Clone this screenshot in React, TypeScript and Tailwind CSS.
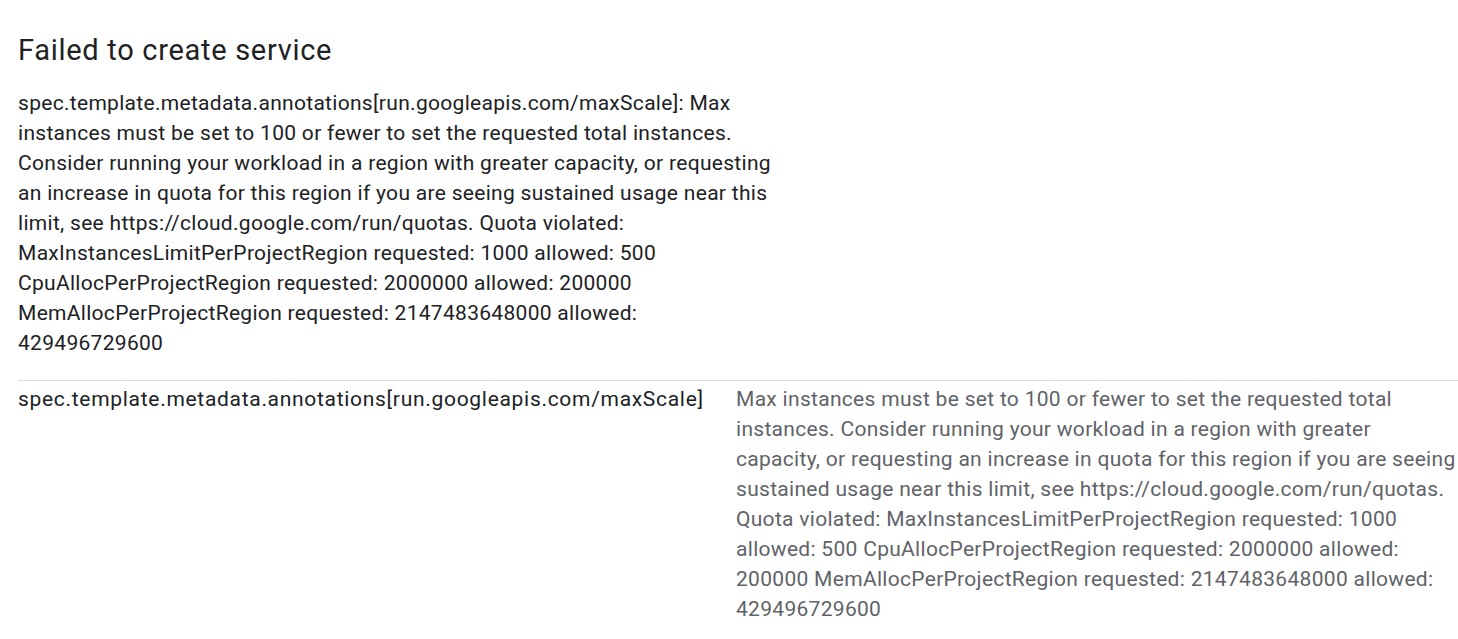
export default function App() {
  return (
    <main className="min-h-screen bg-white pl-[18px] pt-[32px] text-[#202124]" style={{ fontFamily: "Roboto, 'Liberation Sans', sans-serif" }}>
      <h1 className="text-[29px] leading-[36px] font-normal tracking-[0.7px]">Failed to create service</h1>
      <p className="mt-[20px] w-[760px] text-[21px] leading-[30px] tracking-[0.3px]">
        spec.template.metadata.annotations[run.googleapis.com/maxScale]: Max instances must be set to 100 or fewer to set the requested total instances. Consider running your workload in a region with greater capacity, or requesting an increase in quota for this region if you are seeing sustained usage near this limit, see https://cloud.google.com/run/quotas. Quota violated: MaxInstancesLimitPerProjectRegion requested: 1000 allowed: 500 CpuAllocPerProjectRegion requested: 2000000 allowed: 200000 MemAllocPerProjectRegion requested: 2147483648000 allowed: 429496729600
      </p>
      <div className="mt-[22px] border-t border-[#dadce0] pt-[3px] flex text-[21px] leading-[30px] tracking-[0.3px]">
        <div className="w-[718px] shrink-0 tracking-[0.7px]">spec.template.metadata.annotations[run.googleapis.com/maxScale]</div>
        <div className="w-[722px] text-[#5f6368]">
          Max instances must be set to 100 or fewer to set the requested total instances. Consider running your workload in a region with greater capacity, or requesting an increase in quota for this region if you are seeing sustained usage near this limit, see https://cloud.google.com/run/quotas. Quota violated: MaxInstancesLimitPerProjectRegion requested: 1000 allowed: 500 CpuAllocPerProjectRegion requested: 2000000 allowed: 200000 MemAllocPerProjectRegion requested: 2147483648000 allowed: 429496729600
        </div>
      </div>
    </main>
  );
}
